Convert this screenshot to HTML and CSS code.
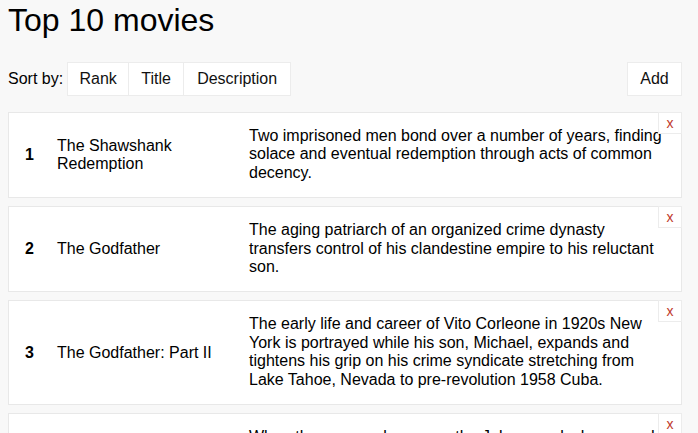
FILE: index.html
```html
<!DOCTYPE html>
<html lang="en">
<head>
  <meta charset="UTF-8" />
  <meta name="viewport" content="width=device-width, initial-scale=1" />
  <title>Top 10 movies</title>
  <link rel="stylesheet" href="styles.css">
</head>
<body>

  <h1>Top 10 movies</h1>

  <div class="toolbar">
    <span class="sort-label">Sort by:</span>
    <div class="sort-group">
      <button class="btn sort-rank">Rank</button>
      <button class="btn sort-title">Title</button>
      <button class="btn sort-desc">Description</button>
    </div>
    <button class="btn add-btn">Add</button>
  </div>

  <div class="movie-list">

    <div class="movie">
      <div class="movie-rank">1</div>
      <div class="movie-title">The Shawshank Redemption</div>
      <div class="movie-desc">Two imprisoned men bond over a number of years, finding solace and eventual redemption through acts of common decency.</div>
      <button class="remove">x</button>
    </div>

    <div class="movie">
      <div class="movie-rank">2</div>
      <div class="movie-title">The Godfather</div>
      <div class="movie-desc">The aging patriarch of an organized crime dynasty transfers control of his clandestine empire to his reluctant son.</div>
      <button class="remove">x</button>
    </div>

    <div class="movie">
      <div class="movie-rank">3</div>
      <div class="movie-title">The Godfather: Part II</div>
      <div class="movie-desc">The early life and career of Vito Corleone in 1920s New York is portrayed while his son, Michael, expands and tightens his grip on his crime syndicate stretching from Lake Tahoe, Nevada to pre-revolution 1958 Cuba.</div>
      <button class="remove">x</button>
    </div>

    <div class="movie">
      <div class="movie-rank">4</div>
      <div class="movie-title">The Dark Knight</div>
      <div class="movie-desc">When the menace known as the Joker wreaks havoc and chaos on the people of Gotham, Batman must accept one of the greatest psychological and physical tests of his ability to fight injustice.</div>
      <button class="remove">x</button>
    </div>

  </div>

</body>
</html>
```

FILE: styles.css
```css
* {
  box-sizing: border-box;
}

body {
  margin: 0;
  padding: 0 16px 0 8px;
  background: #f8f8f8;
  color: #000;
  font-family: 'Liberation Sans', Arial, sans-serif;
  font-size: 16px;
  overflow: hidden;
}

h1 {
  margin: 2px 0 0;
  font-size: 32px;
  font-weight: normal;
  line-height: 37px;
}

.toolbar {
  display: flex;
  align-items: center;
  margin-top: 23px;
  margin-bottom: 16px;
}

.sort-label {
  margin-right: 4px;
}

.sort-group {
  display: flex;
}

.btn {
  height: 34px;
  padding: 0;
  background: #fff;
  border: 1px solid #ececec;
  font-family: inherit;
  font-size: 16px;
  color: #111;
  text-align: center;
  cursor: pointer;
}

.sort-group .btn + .btn {
  border-left: none;
}

.sort-rank {
  width: 62px;
}

.sort-title {
  width: 55px;
}

.sort-desc {
  width: 107px;
}

.add-btn {
  margin-left: auto;
  width: 55px;
}

.movie-list {
  display: flex;
  flex-direction: column;
  gap: 8px;
}

.movie {
  position: relative;
  display: flex;
  align-items: center;
  background: #fff;
  border: 1px solid #e8e8e8;
  line-height: 18.4px;
}

.movie-rank {
  width: 48px;
  padding-left: 16px;
  font-weight: bold;
}

.movie-title {
  width: 192px;
  padding-right: 16px;
}

.movie-desc {
  flex: 1;
  padding: 14px 12px 15px 0;
}

.remove {
  position: absolute;
  top: -1px;
  right: -1px;
  width: 24px;
  height: 22px;
  padding: 0;
  background: #fff;
  border: 1px solid #ececec;
  color: #c0392b;
  font-family: inherit;
  font-size: 14px;
  cursor: pointer;
}
```
